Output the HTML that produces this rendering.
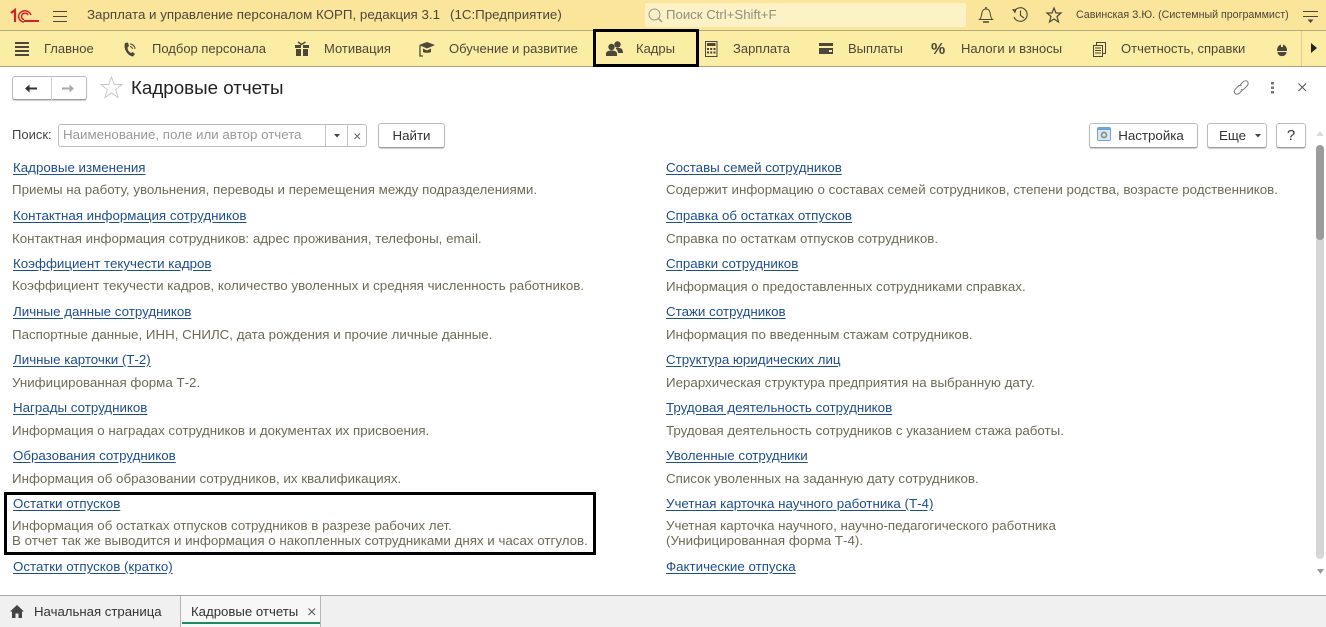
<!DOCTYPE html>
<html><head><meta charset="utf-8"><style>
html,body{margin:0;padding:0;background:#fff}
body{width:1326px;height:627px;position:relative;overflow:hidden;font-family:"Liberation Sans",Arial,sans-serif;font-size:13.33px;color:#333}
.a{position:absolute;white-space:nowrap;line-height:16px}
.l{color:#1f4e8c;text-decoration:underline;text-underline-offset:2px}
.d{color:#6e6b55}
.m{color:#4b473a;font-size:13px}
.b{position:absolute;box-sizing:border-box;background:#fff;border:1px solid #bdbdbd;border-bottom:1px solid #9a9a9a;border-radius:3px;box-shadow:0 1px 1px #ccc;text-align:center;color:#333}
svg{position:absolute;overflow:visible}
</style></head><body>
<div style="position:absolute;left:0;top:0;width:1326px;height:30px;background:#fbe59b"></div>
<div style="position:absolute;left:0;top:30px;width:1326px;height:1px;background:#b5ac7c"></div>
<div style="position:absolute;left:0;top:31px;width:1326px;height:35px;background:#fceda5"></div>
<div style="position:absolute;left:0;top:66px;width:1326px;height:1px;background:#a8a27e"></div>
<svg style="left:0;top:0" width="42" height="30"><path d="M11 13L15 10V22" fill="none" stroke="#d2232a" stroke-width="2.200"/><path d="M31 15A6.500 6.500 0 0 0 18.500 16A6 6 0 0 0 24 22M28 15A3.500 3.500 0 0 0 21.500 16A3 3 0 0 0 24 19.500" fill="none" stroke="#d2232a" stroke-width="1.500"/><path d="M24 21H39" stroke="#d2232a" stroke-width="2"/></svg>
<svg style="left:53px;top:11px" width="15" height="11"><path d="M0 .5H14M0 5.500H14M0 10.500H14" stroke="#4b473a"/></svg>
<div class="a" style="left:87px;top:7px;color:#4b473a">Зарплата и управление персоналом КОРП, редакция 3.1</div>
<div class="a" style="left:450px;top:7px;color:#4b473a">(1С:Предприятие)</div>
<div style="position:absolute;left:645px;top:3px;width:321px;height:24px;background:#fdf2c6;border-radius:2px"></div>
<svg style="left:648px;top:8px" width="15" height="15"><circle cx="6.500" cy="6.500" r="5.500" fill="none" stroke="#999"/><path d="M10.500 10.500L14 14" stroke="#999" stroke-width="1.500"/></svg>
<div class="a" style="left:666px;top:7px;color:#8f8f82;font-size:13.2px">Поиск Ctrl+Shift+F</div>
<svg style="left:978px;top:7px" width="16" height="17"><path d="M1.500 12.500C3.500 11 3.500 8 4 5.500C4.500 3 6 2 8 2C10 2 11.500 3 12 5.500C12.500 8 12.500 11 14.500 12.500Z" fill="none" stroke="#4b473a"/><path d="M8 0V2M5 15H11" stroke="#4b473a" stroke-width="1.500"/></svg>
<svg style="left:1012px;top:7px" width="17" height="16"><path d="M2.500 4A6.800 6.800 0 1 1 2 10" fill="none" stroke="#4b473a" stroke-width="1.100"/><path d="M0 2L4.500 2.500L3 6.500Z" fill="#4b473a"/><path d="M8.500 3.500V8.500L12 11" fill="none" stroke="#4b473a" stroke-width="1.100"/></svg>
<svg style="left:1046px;top:7px" width="16" height="16"><path d="M8 1L10 6H15L11 9.500L12.500 15L8 12L3.500 15L5 9.500L1 6H6Z" fill="none" stroke="#4b473a" stroke-width="1.200"/></svg>
<div class="a" style="left:1076px;top:7px;color:#4b473a;font-size:10.65px">Савинская З.Ю. (Системный программист)</div>
<svg style="left:1303px;top:11px" width="15" height="12"><path d="M0 .5H15M0 5.500H15" stroke="#4b473a"/><path d="M4.500 8.500H10.500L7.500 12Z" fill="#4b473a"/></svg>
<svg style="left:15px;top:42px" width="15" height="14"><path d="M0 1H14M0 5H14M0 9H14M0 13H14" stroke="#4b473a" stroke-width="2"/></svg>
<div class="a m" style="left:44px;top:41px">Главное</div>
<svg style="left:123px;top:42px" width="14" height="15"><path d="M2 1L5 .5L6 4L4.500 5.500C4.500 8 6 10 8 11L9.500 10L12 12L10 14.500C5 14 0 7 2 1Z" fill="#4b473a"/><path d="M7 2A5 5 0 0 1 12 7M7 4.500A3 3 0 0 1 9.500 7" fill="none" stroke="#4b473a"/></svg>
<div class="a m" style="left:152px;top:41px">Подбор персонала</div>
<svg style="left:295px;top:41px" width="14" height="16"><path d="M0 4H6V7H0ZM8 4H14V7H8ZM1 8H6V15H1ZM8 8H13V15H8Z" fill="#4b473a"/><path d="M3 1L6.500 3.500L10.500 1" fill="none" stroke="#4b473a" stroke-width="1.500"/></svg>
<div class="a m" style="left:324px;top:41px">Мотивация</div>
<svg style="left:418px;top:42px" width="17" height="15"><path d="M1 3L9 0L17 3L9 6.500Z" fill="#4b473a"/><path d="M5 6.500V10C7 11 11 11 13 10V6.500L9 8.500Z" fill="#4b473a"/><path d="M2 3.500V14H5" fill="none" stroke="#4b473a" stroke-width="1.300"/></svg>
<div class="a m" style="left:449px;top:41px">Обучение и развитие</div>
<div style="position:absolute;left:593px;top:29px;width:106px;height:38px;box-sizing:border-box;border:3px solid #000"></div>
<svg style="left:606px;top:41px" width="17" height="15"><circle cx="11.500" cy="3.500" r="3.200" fill="#4b473a"/><path d="M10 7H13C16 7 17 9 17 12H12C12 10 11 8.500 10 8Z" fill="#4b473a"/><circle cx="5.500" cy="6" r="3.200" fill="#4b473a"/><path d="M0 15V13C0 10.500 2 9.500 5.500 9.500C9 9.500 11 10.500 11 13V15Z" fill="#4b473a"/></svg>
<div class="a m" style="left:636px;top:41px">Кадры</div>
<svg style="left:705px;top:41px" width="13" height="16"><rect x=".5" y=".5" width="11.500" height="15" fill="none" stroke="#4b473a"/><path d="M2 2H10.500V5H2Z" fill="#4b473a"/><path d="M2 7H4V9H2ZM5.200 7H7.200V9H5.200ZM8.500 7H10.500V9H8.500ZM2 10.500H4V12.500H2ZM5.200 10.500H7.200V12.500H5.200ZM8.500 10.500H10.500V12.500H8.500Z" fill="#4b473a"/></svg>
<div class="a m" style="left:733px;top:41px">Зарплата</div>
<svg style="left:819px;top:43px" width="15" height="12"><path d="M0 0H14V3H0ZM0 5H14V11H0Z" fill="#4b473a"/><rect x="10" y="7" width="3" height="2" fill="#fceda5"/></svg>
<div class="a m" style="left:848px;top:41px">Выплаты</div>
<div class="a" style="left:931px;top:41px;font-weight:bold;font-size:16px;color:#4b473a;line-height:18px">%</div>
<div class="a m" style="left:961px;top:41px">Налоги и взносы</div>
<svg style="left:1093px;top:42px" width="13" height="15"><rect x="3.500" y=".5" width="9" height="11" fill="none" stroke="#4b473a"/><rect x=".5" y="3.500" width="9" height="11" fill="#fceda5" stroke="#4b473a"/><path d="M2 6H8M2 8.500H8M2 11H8" stroke="#4b473a"/></svg>
<div class="a m" style="left:1121px;top:41px">Отчетность, справки</div>
<svg style="left:1276px;top:42px" width="12" height="15"><path d="M1 8A5 5.500 0 0 1 11 8V9H1Z" fill="#4b473a"/><path d="M5 1.500H7V5H5Z" fill="#fceda5"/><path d="M1.500 10H10.500C10.500 15.500 1.500 15.500 1.500 10Z" fill="#4b473a"/></svg>
<div style="position:absolute;left:1301px;top:31px;width:1px;height:35px;background:#d8cf95"></div>
<svg style="left:1311px;top:43px" width="6" height="10"><path d="M0 0L6 5L0 10Z" fill="#222"/></svg>
<div class="b" style="left:12px;top:76px;width:75px;height:24px"></div>
<div style="position:absolute;left:51px;top:76px;width:1px;height:24px;background:#cfcfcf"></div>
<svg style="left:25px;top:84px" width="13" height="9"><path d="M0 4.500L4.500 .5V3.500H12V5.500H4.500V8.500Z" fill="#333"/></svg>
<svg style="left:61px;top:84px" width="13" height="9"><path d="M13 4.500L8.500 .5V3.500H1V5.500H8.500V8.500Z" fill="#aaa"/></svg>
<svg style="left:100px;top:76px" width="23" height="23"><path d="M11.500 1L14.300 8.500H22L15.800 13.500L18 21.500L11.500 17L5 21.500L7.200 13.500L1 8.500H8.700Z" fill="#fff" stroke="#c8c8c8"/></svg>
<div class="a" style="left:131px;top:77px;font-size:18.75px;line-height:22px;color:#222">Кадровые отчеты</div>
<svg style="left:1234px;top:80px" width="15" height="15"><path d="M6 5L9 2C10.500 .5 12.500 .5 13.500 1.500C14.500 2.500 14.500 4.500 13 6L10 9C9 10 7.500 10 7 9M8.500 10L5.500 13C4 14.500 2 14.500 1 13.500C0 12.500 0 10.500 1.500 9L4.500 6C5.500 5 7 5 7.500 6" fill="none" stroke="#777"/></svg>
<svg style="left:1271px;top:82px" width="3" height="12"><path d="M0 0H3V2.500H0ZM0 4.500H3V7H0ZM0 9H3V11.500H0Z" fill="#777"/></svg>
<svg style="left:1298px;top:83px" width="9" height="9"><path d="M.5 .5L8 8M8 .5L.5 8" stroke="#555"/></svg>
<div class="a" style="left:12px;top:127px;color:#444;font-size:13px">Поиск:</div>
<div style="position:absolute;left:58px;top:124px;width:309px;height:23px;box-sizing:border-box;border:1px solid #bcbcbc;border-radius:3px;background:#fff"></div>
<div style="position:absolute;left:325px;top:125px;width:1px;height:21px;background:#c6c6c6"></div>
<div style="position:absolute;left:347px;top:125px;width:1px;height:21px;background:#c6c6c6"></div>
<div class="a" style="left:63px;top:127px;color:#9a9a9a">Наименование, поле или автор отчета</div>
<svg style="left:334px;top:134px" width="6" height="4"><path d="M0 0H6L3 3.500Z" fill="#444"/></svg>
<svg style="left:354px;top:133px" width="7" height="7"><path d="M.5 .5L6 6M6 .5L.5 6" stroke="#666"/></svg>
<div class="b" style="left:378px;top:123px;width:67px;height:25px;line-height:23px">Найти</div>
<div class="b" style="left:1089px;top:123px;width:109px;height:25px;line-height:23px;padding-left:15px;font-size:13.33px">Настройка</div>
<svg style="left:1097px;top:127px" width="15" height="15"><rect width="14" height="14" rx="2" fill="#6aa5d8"/><rect x="1" y="3" width="12" height="10" fill="#dfe6ea"/><circle cx="7" cy="8" r="3.500" fill="#8a9aa5"/><circle cx="7" cy="8" r="1.500" fill="#dfe6ea"/></svg>
<div class="b" style="left:1207px;top:123px;width:60px;height:25px;line-height:23px;padding-right:9px">Еще</div>
<svg style="left:1255px;top:134px" width="6" height="4"><path d="M0 0H6L3 3.500Z" fill="#444"/></svg>
<div class="b" style="left:1276px;top:123px;width:30px;height:25px;line-height:23px;font-size:15px">?</div>
<svg style="left:1316px;top:131px" width="8" height="5"><path d="M0 5H8L4 0Z" fill="#ddd"/></svg>
<div style="position:absolute;left:1316px;top:145px;width:8px;height:414px;background:#d6d6d6;border-radius:4px"></div>
<div style="position:absolute;left:1316px;top:145px;width:8px;height:95px;background:#9b9b9b;border-radius:4px"></div>
<svg style="left:1317px;top:569px" width="7" height="5"><path d="M0 0H7L3.500 5Z" fill="#999"/></svg>

<div class="a l" style="left:13px;top:160px">Кадровые изменения</div>
<div class="a d" style="left:12px;top:182px">Приемы на работу, увольнения, переводы и перемещения между подразделениями.</div>
<div class="a l" style="left:13px;top:208px">Контактная информация сотрудников</div>
<div class="a d" style="left:12px;top:231px">Контактная информация сотрудников: адрес проживания, телефоны, email.</div>
<div class="a l" style="left:13px;top:256px">Коэффициент текучести кадров</div>
<div class="a d" style="left:12px;top:278px">Коэффициент текучести кадров, количество уволенных и средняя численность работников.</div>
<div class="a l" style="left:13px;top:304px">Личные данные сотрудников</div>
<div class="a d" style="left:12px;top:327px">Паспортные данные, ИНН, СНИЛС, дата рождения и прочие личные данные.</div>
<div class="a l" style="left:13px;top:352px">Личные карточки (Т-2)</div>
<div class="a d" style="left:12px;top:375px">Унифицированная форма Т-2.</div>
<div class="a l" style="left:13px;top:400px">Награды сотрудников</div>
<div class="a d" style="left:12px;top:423px">Информация о наградах сотрудников и документах их присвоения.</div>
<div class="a l" style="left:13px;top:448px">Образования сотрудников</div>
<div class="a d" style="left:12px;top:471px">Информация об образовании сотрудников, их квалификациях.</div>
<div style="position:absolute;left:4px;top:492px;width:592px;height:63px;box-sizing:border-box;border:3px solid #000"></div>
<div class="a l" style="left:13px;top:496px">Остатки отпусков</div>
<div class="a d" style="left:12px;top:518px">Информация об остатках отпусков сотрудников в разрезе рабочих лет.</div>
<div class="a d" style="left:12px;top:533px">В отчет так же выводится и информация о накопленных сотрудниками днях и часах отгулов.</div>
<div class="a l" style="left:13px;top:559px">Остатки отпусков (кратко)</div>

<div class="a l" style="left:666px;top:160px">Составы семей сотрудников</div>
<div class="a d" style="left:666px;top:182px">Содержит информацию о составах семей сотрудников, степени родства, возрасте родственников.</div>
<div class="a l" style="left:666px;top:208px">Справка об остатках отпусков</div>
<div class="a d" style="left:666px;top:231px">Справка по остаткам отпусков сотрудников.</div>
<div class="a l" style="left:666px;top:256px">Справки сотрудников</div>
<div class="a d" style="left:666px;top:279px">Информация о предоставленных сотрудниками справках.</div>
<div class="a l" style="left:666px;top:304px">Стажи сотрудников</div>
<div class="a d" style="left:666px;top:327px">Информация по введенным стажам сотрудников.</div>
<div class="a l" style="left:666px;top:352px">Структура юридических лиц</div>
<div class="a d" style="left:666px;top:375px">Иерархическая структура предприятия на выбранную дату.</div>
<div class="a l" style="left:666px;top:400px">Трудовая деятельность сотрудников</div>
<div class="a d" style="left:666px;top:423px">Трудовая деятельность сотрудников с указанием стажа работы.</div>
<div class="a l" style="left:666px;top:448px">Уволенные сотрудники</div>
<div class="a d" style="left:666px;top:471px">Список уволенных на заданную дату сотрудников.</div>
<div class="a l" style="left:666px;top:496px">Учетная карточка научного работника (Т-4)</div>
<div class="a d" style="left:666px;top:518px">Учетная карточка научного, научно-педагогического работника</div>
<div class="a d" style="left:666px;top:533px">(Унифицированная форма Т-4).</div>
<div class="a l" style="left:666px;top:559px">Фактические отпуска</div>

<div style="position:absolute;left:0;top:595px;width:1326px;height:32px;background:#f0f0f0;border-top:1px solid #a8a8a8;box-sizing:border-box"></div>
<svg style="left:10px;top:605px" width="14" height="13"><path d="M7 0L14 6.500H12V13H8.500V8.500H5.500V13H2V6.500H0Z" fill="#444"/></svg>
<div class="a" style="left:34px;top:604px;color:#333;font-size:13.2px">Начальная страница</div>
<div style="position:absolute;left:180px;top:596px;width:1px;height:31px;background:#b5b5b5"></div>
<div style="position:absolute;left:181px;top:596px;width:139px;height:31px;background:#f7f7f7"></div>
<div style="position:absolute;left:320px;top:596px;width:1px;height:31px;background:#b5b5b5"></div>
<div style="position:absolute;left:182px;top:622px;width:138px;height:2px;background:#1c8a5e"></div>
<div class="a" style="left:191px;top:604px;color:#333;font-size:13.2px">Кадровые отчеты</div>
<svg style="left:308px;top:608px" width="8" height="8"><path d="M.5 .5L7 7M7 .5L.5 7" stroke="#555"/></svg>
</body></html>
